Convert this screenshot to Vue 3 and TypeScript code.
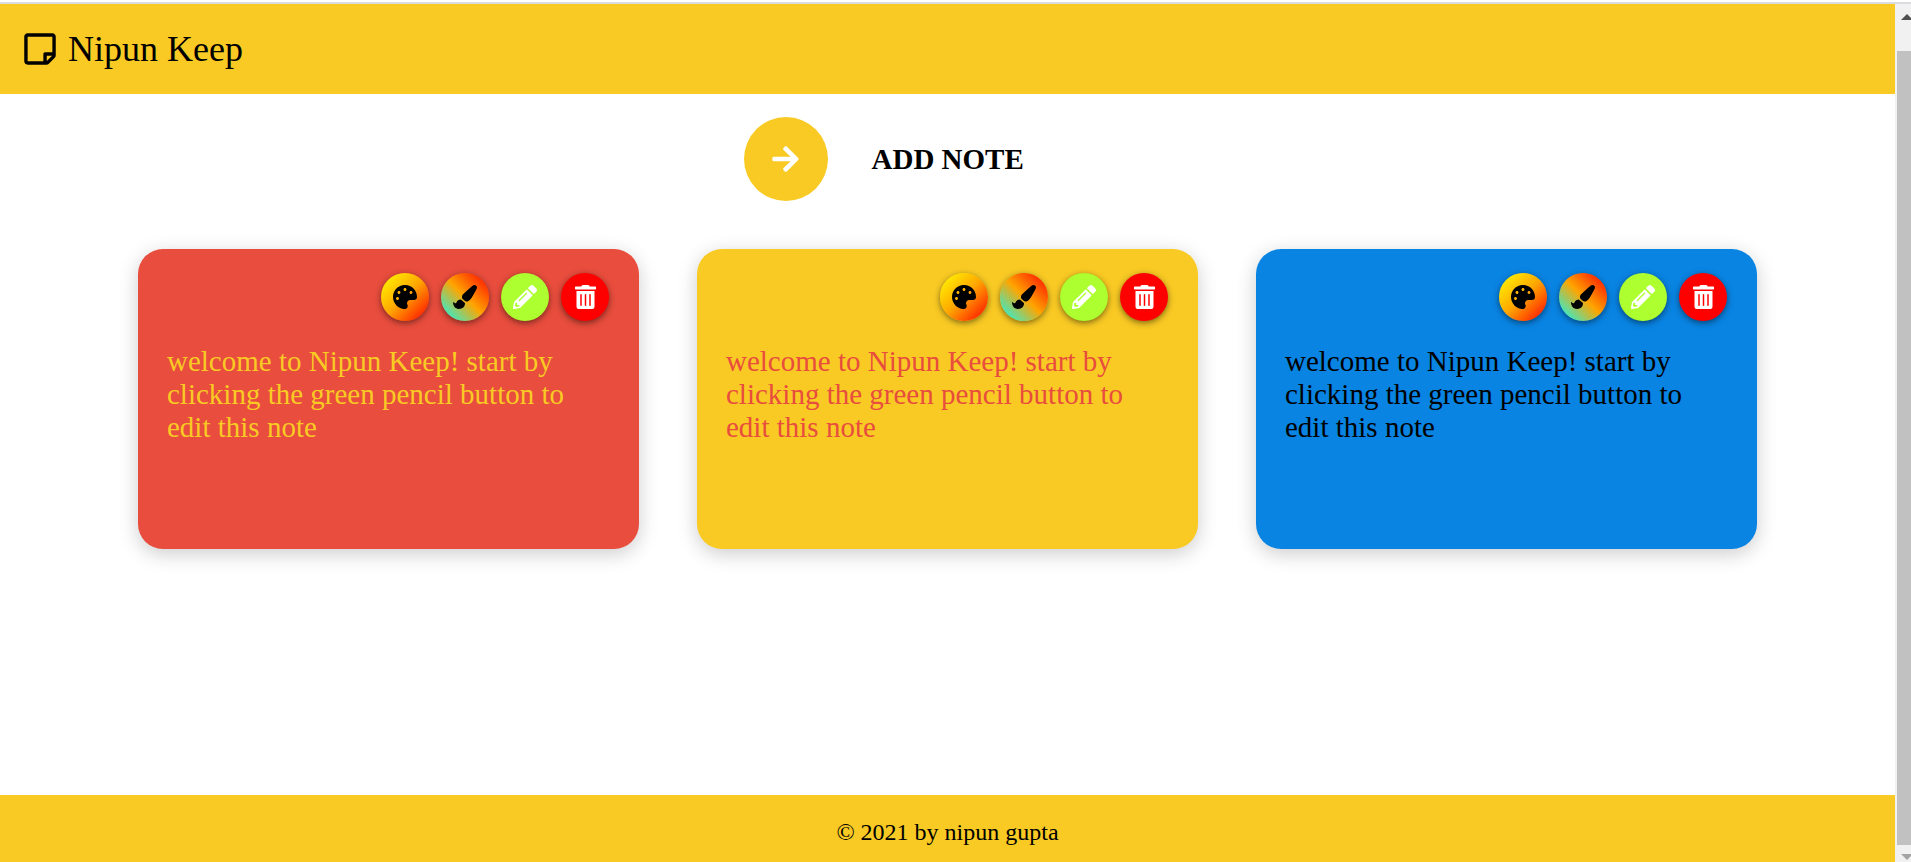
<script setup lang="ts">
interface Note {
  id: number
  theme: string
  text: string
}

interface Action {
  name: string
  label: string
  viewBox: string
  path: string
}

const message = 'welcome to Nipun Keep! start by clicking the green pencil button to edit this note'

const notes: Note[] = [
  { id: 1, theme: 'red', text: message },
  { id: 2, theme: 'yellow', text: message },
  { id: 3, theme: 'blue', text: message },
]

const actions: Action[] = [
  {
    name: 'palette',
    label: 'Change note colour',
    viewBox: '0 0 512 512',
    path: 'M204.3 5C104.9 24.4 24.8 104.3 5.2 203.4c-37 187 131.7 326.4 258.8 306.7 41.2-6.4 61.4-54.6 42.5-91.7-23.1-45.4 9.9-98.4 60.9-98.4h79.7c35.8 0 64.8-29.6 64.9-65.3C511.5 97.1 368.1-26.9 204.3 5zM96 320c-17.7 0-32-14.3-32-32s14.3-32 32-32 32 14.3 32 32-14.3 32-32 32zm32-128c-17.7 0-32-14.3-32-32s14.3-32 32-32 32 14.3 32 32-14.3 32-32 32zm128-64c-17.7 0-32-14.3-32-32s14.3-32 32-32 32 14.3 32 32-14.3 32-32 32zm128 64c-17.7 0-32-14.3-32-32s14.3-32 32-32 32 14.3 32 32-14.3 32-32 32z',
  },
  {
    name: 'brush',
    label: 'Change text colour',
    viewBox: '0 0 512 512',
    path: 'M167.02 309.34c-40.12 2.58-76.53 17.86-97.19 72.3-2.35 6.21-8 9.98-14.59 9.98-11.11 0-45.46-27.67-55.25-34.35C0 439.62 37.93 512 128 512c75.86 0 128-43.77 128-120.19 0-3.11-.65-6.08-.97-9.13l-88.01-73.34zM457.89 0c-15.16 0-29.37 6.71-40.21 16.45C213.27 199.05 192 203.34 192 257.09c0 13.7 3.25 26.76 8.73 38.7l63.82 53.18c7.21 1.8 14.64 3.03 22.39 3.03 62.11 0 98.11-45.47 211.16-256.46 7.38-14.35 13.9-29.85 13.9-45.99C512 20.64 486 0 457.89 0z',
  },
  {
    name: 'pencil',
    label: 'Edit note',
    viewBox: '0 0 512 512',
    path: 'M497.9 142.1l-46.1 46.1c-4.7 4.7-12.3 4.7-17 0l-111-111c-4.7-4.7-4.7-12.3 0-17l46.1-46.1c18.7-18.7 49.1-18.7 67.9 0l60.1 60.1c18.8 18.7 18.8 49.1 0 67.9zM284.2 99.8L21.6 362.4.4 483.9c-2.9 16.4 11.4 30.6 27.8 27.8l121.5-21.3 262.6-262.6c4.7-4.7 4.7-12.3 0-17l-111-111c-4.8-4.7-12.4-4.7-17.1 0zM124.1 339.9c-5.5-5.5-5.5-14.3 0-19.8l154-154c5.5-5.5 14.3-5.5 19.8 0s5.5 14.3 0 19.8l-154 154c-5.5 5.5-14.3 5.5-19.8 0zM88 424h48v36.3l-64.5 11.3-31.1-31.1L51.7 376H88v48z',
  },
  {
    name: 'trash',
    label: 'Delete note',
    viewBox: '0 0 448 512',
    path: 'M32 464a48 48 0 0 0 48 48h288a48 48 0 0 0 48-48V128H32zm272-256a16 16 0 0 1 32 0v224a16 16 0 0 1-32 0zm-96 0a16 16 0 0 1 32 0v224a16 16 0 0 1-32 0zm-96 0a16 16 0 0 1 32 0v224a16 16 0 0 1-32 0zM432 32H312l-9.4-18.7A24 24 0 0 0 281.1 0H166.8a23.72 23.72 0 0 0-21.4 13.3L136 32H16A16 16 0 0 0 0 48v32a16 16 0 0 0 16 16h416a16 16 0 0 0 16-16V48a16 16 0 0 0-16-16z',
  },
]
</script>

<template>
  <div class="window">
    <div class="page">
      <header class="header">
        <svg class="logo" viewBox="0 0 448 512" aria-hidden="true">
          <path d="M448 348.106V80c0-26.51-21.49-48-48-48H48C21.49 32 0 53.49 0 80v351.988c0 26.51 21.49 48 48 48h268.118a48 48 0 0 0 33.941-14.059l83.882-83.882A48 48 0 0 0 448 348.106zm-128 80v-76.118h76.118L320 428.106zM400 80v223.988H296c-13.255 0-24 10.745-24 24v104H48V80h352z" />
        </svg>
        <h1 class="title">Nipun Keep</h1>
      </header>

      <main class="main">
        <div class="add">
          <button id="add-note" class="add-button" type="button">
            <svg class="arrow" viewBox="0 0 448 512" aria-hidden="true">
              <path d="M190.5 66.9l22.2-22.2c9.4-9.4 24.6-9.4 33.9 0L441 239c9.4 9.4 9.4 24.6 0 33.9L246.6 467.3c-9.4 9.4-24.6 9.4-33.9 0l-22.2-22.2c-9.5-9.5-9.3-25 .4-34.3L311.4 296H24c-13.3 0-24-10.7-24-24v-32c0-13.3 10.7-24 24-24h287.4L190.9 101.2c-9.8-9.3-10-24.8-.4-34.3z" />
            </svg>
          </button>
          <label class="add-label" for="add-note">ADD NOTE</label>
        </div>

        <section class="notes" aria-label="Notes">
          <article v-for="note in notes" :key="note.id" class="note" :class="note.theme">
            <div class="actions">
              <button
                v-for="action in actions"
                :key="action.name"
                class="action"
                :class="action.name"
                type="button"
                :aria-label="action.label"
              >
                <svg class="icon" :viewBox="action.viewBox" aria-hidden="true">
                  <path :d="action.path" />
                </svg>
              </button>
            </div>
            <p class="text">{{ note.text }}</p>
          </article>
        </section>
      </main>

      <footer class="footer">© 2021 by nipun gupta</footer>
    </div>

    <div class="scrollbar" aria-hidden="true">
      <svg class="scroll-arrow" viewBox="0 0 12 6"><path d="M0 6L6 0L12 6Z" fill="#505050" /></svg>
      <div class="thumb"></div>
      <svg class="scroll-arrow" viewBox="0 0 12 6"><path d="M0 0L6 6L12 0Z" fill="#a3a3a3" /></svg>
    </div>
  </div>
</template>

<style>
body {
  margin: 0;
  overflow: hidden;
}
</style>

<style scoped>
.window {
  box-sizing: border-box;
  display: grid;
  grid-template-columns: 1fr 16px;
  min-height: 100vh;
  padding-top: 2px;
  overflow: hidden;
  background: #fff;
  color: #000;
  font-family: "Liberation Serif", "Times New Roman", serif;
}

.page,
.scrollbar {
  border-top: 2px solid #dadce0;
}

.page {
  display: flex;
  flex-direction: column;
}

.header {
  display: flex;
  align-items: center;
  gap: 12px;
  box-sizing: border-box;
  height: 90px;
  padding: 0 24px;
  background: #f9ca24;
}

.logo {
  width: 32px;
  height: 36px;
}

.title {
  margin: 0;
  font-size: 36px;
  font-weight: 400;
  line-height: 42px;
}

.main {
  flex: 1;
  padding-top: 23px;
}

.add {
  display: flex;
  align-items: center;
  gap: 44px;
  width: 408px;
  margin: 0 auto 48px;
}

.add-button {
  display: grid;
  place-items: center;
  width: 84px;
  height: 84px;
  padding: 0;
  border: 0;
  border-radius: 50%;
  background: #f9ca24;
  color: #fff;
  cursor: pointer;
}

.arrow {
  width: 27px;
  height: 30px;
}

svg {
  display: block;
  fill: currentColor;
}

.add-label {
  font-size: 29px;
  font-weight: 700;
  line-height: 33px;
}

.notes {
  display: grid;
  grid-template-columns: repeat(3, 1fr);
  gap: 58px;
  padding: 0 138px 48px;
}

.note {
  box-sizing: border-box;
  min-height: 300px;
  padding: 24px 30px 24px 29px;
  border-radius: 25px;
  box-shadow: 0 5px 20px rgba(0, 0, 0, 0.2);
}

.red {
  background: #e84d3d;
  color: #f9ca24;
}

.yellow {
  background: #f9ca24;
  color: #e84d3d;
}

.blue {
  background: #0984e3;
  color: #000;
}

.actions {
  display: flex;
  justify-content: flex-end;
  gap: 12px;
}

.action {
  display: grid;
  place-items: center;
  width: 48px;
  height: 48px;
  padding: 0;
  border: 0;
  border-radius: 50%;
  box-shadow: 0 2px 6px rgba(0, 0, 0, 0.5);
  color: #fff;
  cursor: pointer;
}

.palette {
  background: linear-gradient(to bottom right, yellow, orange, red);
  color: #000;
}

.brush {
  background: linear-gradient(to top right, cyan, orange, red);
  color: #000;
}

.pencil {
  background: greenyellow;
}

.trash {
  background: red;
}

.icon {
  height: 24px;
}

.text {
  margin: 24px 0 0;
  font-size: 29px;
  line-height: 33px;
}

.footer {
  padding: 24px 0 16px;
  background: #f9ca24;
  font-size: 24px;
  line-height: 27px;
  text-align: center;
}

.scrollbar {
  display: flex;
  flex-direction: column;
  background: #f1f1f1;
  overflow: hidden;
}

.scroll-arrow {
  flex: none;
  width: 12px;
  height: 6px;
  margin: 10px 0 0 6px;
}

.scroll-arrow:last-child {
  margin: 9px 0 2px 6px;
}

.thumb {
  flex: 1;
  margin: 31px 0 0 2px;
  background: #c1c1c1;
}
</style>
